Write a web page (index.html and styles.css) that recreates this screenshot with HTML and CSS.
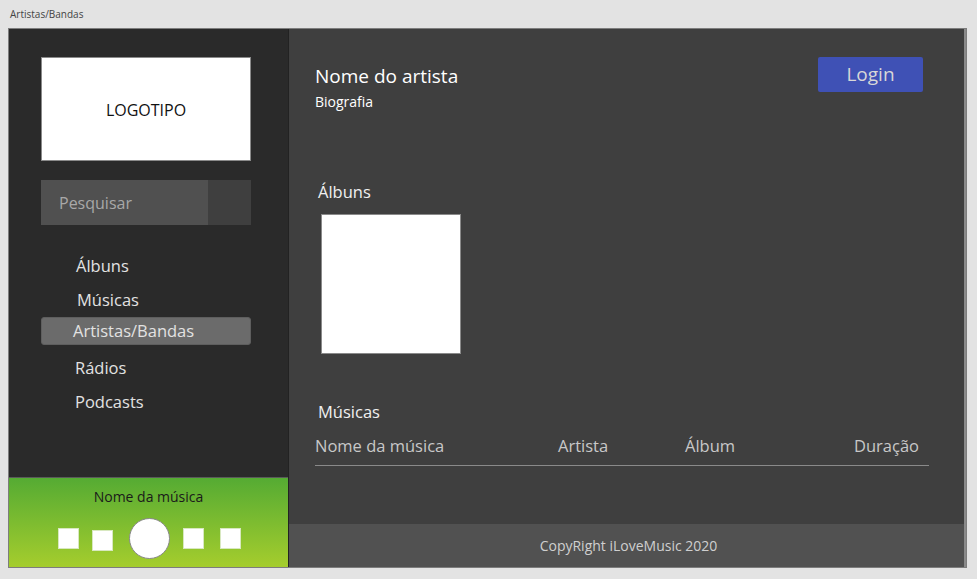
FILE: index.html
```html
<!DOCTYPE html>
<html lang="pt">
<head>
<meta charset="utf-8">
<title>Artistas/Bandas</title>
<link rel="stylesheet" href="styles.css">
</head>
<body>
<div class="titlebar">Artistas/Bandas</div>
<div class="frame">
  <aside class="sidebar">
    <div class="side-top">
      <div class="logo">LOGOTIPO</div>
      <div class="search">
        <div class="search-input">Pesquisar</div>
        <div class="search-btn"></div>
      </div>
      <nav class="nav">
        <div class="nav-item n1">Álbuns</div>
        <div class="nav-item n2">Músicas</div>
        <div class="nav-item active">Artistas/Bandas</div>
        <div class="nav-item n4">Rádios</div>
        <div class="nav-item n5">Podcasts</div>
      </nav>
    </div>
    <div class="player">
      <div class="song">Nome da música</div>
      <div class="controls">
        <span class="sq"></span>
        <span class="sq sq2"></span>
        <span class="play"></span>
        <span class="sq"></span>
        <span class="sq sq5"></span>
      </div>
    </div>
  </aside>
  <main class="main">
    <div class="content">
      <div class="head">
        <div>
          <div class="artist">Nome do artista</div>
          <div class="bio">Biografia</div>
        </div>
        <div class="login">Login</div>
      </div>
      <div class="sec-title albums-title">Álbuns</div>
      <div class="album"></div>
      <div class="sec-title songs-title">Músicas</div>
      <div class="table-head">
        <span class="c1">Nome da música</span>
        <span class="c2">Artista</span>
        <span class="c3">Álbum</span>
        <span class="c4">Duração</span>
      </div>
    </div>
    <footer class="footer">CopyRight iLoveMusic 2020</footer>
  </main>
</div>
</body>
</html>
```
FILE: styles.css
```css
* { box-sizing: border-box; }
html, body { margin: 0; padding: 0; }
body {
  background: #e3e3e3;
  font-family: "Open Sans", "Noto Sans", sans-serif;
  width: 977px;
  height: 579px;
  overflow: hidden;
}
.titlebar {
  height: 28px;
  padding: 7px 0 0 10px;
  font-size: 10px;
  line-height: 14px;
  color: #444;
}
.frame {
  margin-left: 8px;
  width: 959px;
  height: 540px;
  border: 1px solid #7d7d7d;
  display: flex;
}
.sidebar {
  width: 280px;
  background: #2a2a2a;
  border-right: 1px solid #222;
  display: flex;
  flex-direction: column;
}
.side-top { flex: 1; padding: 28px 0 0 32px; }
.logo {
  width: 210px;
  height: 104px;
  background: #fff;
  border: 1px solid #8a8a8a;
  display: flex;
  align-items: center;
  justify-content: center;
  font-size: 16px;
  color: #111;
  padding-top: 2px;
}
.search {
  margin-top: 19px;
  width: 210px;
  height: 45px;
  display: flex;
}
.search-input {
  width: 167px;
  background: #505050;
  color: #a8a8a8;
  font-size: 16px;
  padding: 12px 0 0 18px;
}
.search-btn { flex: 1; background: #3f3f3f; }
.nav { margin-top: 30px; width: 210px; }
.nav-item {
  color: #e2e2e2;
  font-size: 16.5px;
  height: 22px;
  line-height: 22px;
}
.n1 { padding-left: 35px; }
.n2 { padding-left: 36px; margin-top: 12px; }
.active {
  margin-top: 6px;
  height: 28px;
  line-height: 26px;
  padding-left: 31px;
  background: #6b6b6b;
  border: 1px solid #5e5e5e;
  border-radius: 3px;
}
.n4 { padding-left: 34px; margin-top: 12px; }
.n5 { padding-left: 34px; margin-top: 12px; }
.player {
  height: 90px;
  border-top: 1px solid #5a5a5a;
  background: linear-gradient(#55ab33, #a5cd2d);
  display: flex;
  flex-direction: column;
  align-items: center;
}
.song {
  margin-top: 9px;
  font-size: 14px;
  color: #1a1a1a;
  line-height: 20px;
}
.controls {
  margin-top: 11px;
  display: flex;
  align-items: center;
  gap: 13px;
  margin-left: 1px;
}
.sq {
  width: 21px;
  height: 21px;
  background: #fff;
  border: 1px solid #d8e8c0;
}
.sq2 { margin-top: 4px; }
.sq5 { margin-left: 3px; }
.play {
  width: 41px;
  height: 41px;
  border-radius: 50%;
  background: #fff;
  border: 1px solid #888;
  margin-left: 3px;
}
.main {
  flex: 1;
  background: #3f3f3f;
  border-right: 2px solid #8a8a8a;
  display: flex;
  flex-direction: column;
}
.content { flex: 1; padding: 28px 0 0 26px; }
.head {
  display: flex;
  justify-content: space-between;
  align-items: flex-start;
  padding-right: 41px;
}
.artist {
  margin-top: 6px;
  font-size: 19px;
  color: #fff;
  line-height: 26px;
}
.bio { margin-top: 4px; font-size: 14px; color: #fff; line-height: 18px; }
.login {
  width: 105px;
  height: 35px;
  background: #3f51b5;
  border-radius: 2px;
  color: #d8d8d8;
  font-size: 19px;
  line-height: 35px;
  text-align: center;
}
.sec-title { font-size: 16.5px; color: #f0f0f0; line-height: 22px; padding-left: 3px; }
.albums-title { margin-top: 70px; }
.album {
  margin: 11px 0 0 6px;
  width: 140px;
  height: 140px;
  background: #fff;
  border: 1px solid #8a8a8a;
}
.songs-title { margin-top: 47px; }
.table-head {
  margin-top: 12px;
  width: 614px;
  height: 22px;
  border-bottom: 1px solid #8a8a8a;
  display: flex;
  font-size: 16.5px;
  color: #c8c8c8;
  line-height: 22px;
  box-sizing: content-box;
  padding-bottom: 8px;
}
.c1 { width: 243px; }
.c2 { width: 127px; }
.c3 { width: 150px; }
.c4 { width: 84px; text-align: right; }
.footer {
  height: 43px;
  background: #515151;
  color: #cfcfcf;
  font-size: 14px;
  display: flex;
  align-items: center;
  justify-content: center;
  padding-left: 4px;
}
```
